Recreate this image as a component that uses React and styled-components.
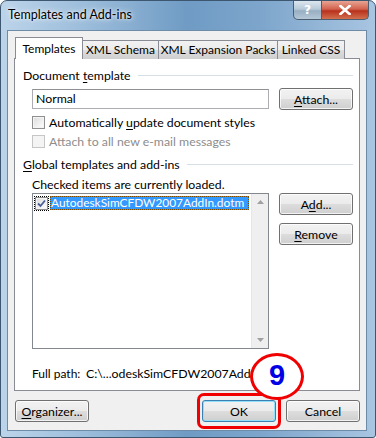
import React from 'react';
import styled, { createGlobalStyle, css } from 'styled-components';

const GlobalStyle = createGlobalStyle`
  html, body {
    margin: 0;
    padding: 0;
    background: #ffffff;
  }
  body {
    font-family: "Segoe UI", Lato, "Noto Sans", sans-serif;
    font-size: 12.3px;
    line-height: 15px;
    color: #000;
  }
`;

const Window = styled.div`
  position: relative;
  width: 376px;
  height: 438px;
  box-sizing: border-box;
  border: 1px solid #3d5770;
  border-radius: 7px 7px 3px 3px;
  background: linear-gradient(to right, #bcd4ea 0%, #98bad9 25%, #6f9bc4 50%, #7ea6cc 70%, #a8c5e1 100%);
  display: flex;
  flex-direction: column;
  padding: 0 8px 6px 6px;
  overflow: hidden;
`;

const TitleBar = styled.div`
  height: 28px;
  display: flex;
  align-items: flex-start;
  justify-content: space-between;
`;

const Title = styled.div`
  padding: 6px 0 0 1px;
  font-size: 12.5px;
  color: #000;
  text-shadow: 0 0 6px rgba(255, 255, 255, 0.9), 0 0 3px rgba(255, 255, 255, 0.9);
`;

const CaptionButtons = styled.div`
  display: flex;
  margin-right: -2px;
`;

const CaptionButton = styled.div`
  height: 19px;
  box-sizing: border-box;
  border: 1px solid #4b5d70;
  border-top: none;
  display: flex;
  align-items: center;
  justify-content: center;
  color: #fff;
  font-weight: bold;
  font-family: "DejaVu Sans", sans-serif;
  ${(p) =>
    p.close
      ? css`
          width: 47px;
          border-radius: 0 0 5px 0;
          border-left: none;
          background: linear-gradient(to bottom, #e8a493 0%, #d2624e 45%, #b8311c 55%, #d2704f 100%);
        `
      : css`
          width: 29px;
          border-radius: 0 0 0 5px;
          background: linear-gradient(to bottom, #dce6ef 0%, #b8cad9 45%, #98aec2 55%, #b4c8d8 100%);
        `}
`;

const Client = styled.div`
  flex: 1;
  background: #f0f0f0;
  border: 1px solid #6e8ba7;
  margin-top: 1px;
  padding: 6px 6px 0 6px;
  display: flex;
  flex-direction: column;
`;

const Tabs = styled.div`
  display: flex;
  align-items: flex-end;
  padding-left: 1px;
  height: 22px;
  position: relative;
  z-index: 1;
  margin-bottom: -1px;
  font-size: 12px;
`;

const Tab = styled.div`
  box-sizing: border-box;
  width: ${(p) => p.w}px;
  border: 1px solid #898c95;
  border-bottom: none;
  margin-right: -1px;
  white-space: nowrap;
  display: flex;
  justify-content: center;
  ${(p) =>
    p.active
      ? css`
          height: 22px;
          padding-top: 3px;
          background: #fff;
          position: relative;
          z-index: 2;
        `
      : css`
          height: 19px;
          padding-top: 1px;
          background: linear-gradient(to bottom, #f2f2f2 0%, #ebebeb 50%, #dddddd 51%, #cfcfcf 100%);
        `}
`;

const Panel = styled.div`
  background: #fff;
  border: 1px solid #898c95;
  height: 333px;
  box-sizing: border-box;
  padding: 8px 6px 0 8px;
  display: flex;
  flex-direction: column;
`;

const GroupHeader = styled.div`
  display: flex;
  align-items: center;
  height: 16px;
  margin-top: ${(p) => p.gap || 0}px;
  &::after {
    content: '';
    flex: 1;
    border-top: 1px solid #d5dfe5;
    margin-left: 7px;
  }
`;

const Indent = styled.div`
  padding-left: 9px;
  height: ${(p) => p.h || 15}px;
  margin-top: ${(p) => p.gap || 0}px;
  display: flex;
  align-items: center;
  white-space: nowrap;
`;

const TextBox = styled.div`
  width: 237px;
  height: 20px;
  box-sizing: border-box;
  border: 1px solid #abadb3;
  border-top-color: #8e9094;
  padding: 1px 0 0 3px;
  line-height: 16px;
`;

const Button = styled.div`
  width: ${(p) => p.w || 74}px;
  height: 22px;
  box-sizing: border-box;
  border: 1px solid ${(p) => (p.primary ? '#3c7fb1' : '#707070')};
  border-radius: 3px;
  background: linear-gradient(to bottom, #f2f2f2 0%, #ebebeb 50%, #dddddd 51%, #cfcfcf 100%);
  box-shadow: inset 0 0 0 1px ${(p) => (p.primary ? '#8ee0fb' : 'rgba(255,255,255,0.75)')};
  display: flex;
  align-items: center;
  justify-content: center;
  flex-shrink: 0;
  margin-left: ${(p) => p.ml || 0}px;
`;

const Check = styled.div`
  width: 13px;
  height: 13px;
  box-sizing: border-box;
  border: 1px solid ${(p) => (p.disabled ? '#c6c6c6' : '#8f8f8f')};
  background: ${(p) =>
    p.disabled
      ? '#f4f4f4'
      : 'linear-gradient(135deg, #dcdcdc 0%, #f0f0f0 60%, #ffffff 100%)'};
  box-shadow: inset 0 0 0 1px #f4f4f4;
  flex-shrink: 0;
  display: flex;
  align-items: center;
  justify-content: center;
  margin-right: 4px;
`;

const CheckLabel = styled.span`
  color: ${(p) => (p.disabled ? '#8d8d8d' : '#000')};
`;

const Key = styled.span`
  text-decoration: underline;
  text-underline-offset: 2px;
`;

const ListRow = styled.div`
  display: flex;
  margin-top: 1px;
  padding-left: 9px;
  gap: 10px;
  align-items: flex-start;
`;

const ListBox = styled.div`
  width: 237px;
  height: 156px;
  box-sizing: border-box;
  border: 1px solid #828790;
  display: flex;
`;

const ListItems = styled.div`
  flex: 1;
  min-width: 0;
  padding: 2px 0 0 2px;
`;

const ListItem = styled.div`
  display: flex;
  align-items: center;
  height: 14px;
  .check {
    outline: 1px dotted #000;
    margin-right: 2px;
  }
`;

const Selected = styled.div`
  flex: 1;
  height: 14px;
  line-height: 14px;
  font-size: 11.9px;
  background: #3399ff;
  color: #fff;
  padding-left: 1px;
  outline: 1px dotted #7a4a00;
  outline-offset: -1px;
  margin-right: 2px;
  white-space: nowrap;
  overflow: hidden;
`;

const ScrollBar = styled.div`
  width: 17px;
  flex-shrink: 0;
  background: #efefef;
  border-left: 1px solid #e6e6e6;
  display: flex;
  flex-direction: column;
  justify-content: space-between;
  align-items: center;
  padding: 6px 0 6px;
  box-sizing: border-box;
`;

const ButtonStack = styled.div`
  display: flex;
  flex-direction: column;
  gap: 8px;
`;

const PathLabel = styled.span`
  width: 54px;
  flex-shrink: 0;
  font-size: 12px;
`;

const Footer = styled.div`
  display: flex;
  align-items: center;
  height: 22px;
  margin-top: 9px;
  padding-left: 1px;
`;

const Spacer = styled.div`
  flex: 1;
`;

const Highlight = styled.div`
  position: absolute;
  left: 196px;
  top: 392px;
  width: 84px;
  height: 36px;
  box-sizing: border-box;
  border: 3px solid #f00000;
  border-radius: 7px;
  pointer-events: none;
`;

const Badge = styled.div`
  position: absolute;
  left: 249px;
  top: 352px;
  width: 54px;
  height: 47px;
  box-sizing: border-box;
  border: 3px solid #f00000;
  border-radius: 50%;
  background: #fff;
  color: #0000e6;
  font-family: "Liberation Sans", Arial, sans-serif;
  font-weight: bold;
  font-size: 29px;
  line-height: 1;
  display: flex;
  align-items: center;
  justify-content: center;
  padding-bottom: 2px;
`;

const Arrow = ({ down }) => (
  <svg width="7" height="4" viewBox="0 0 7 4">
    <path d={down ? 'M0 0 H7 L3.5 4 Z' : 'M0 4 H7 L3.5 0 Z'} fill="#a0a0a0" />
  </svg>
);

const Tick = () => (
  <svg width="9" height="9" viewBox="0 0 9 9">
    <path d="M1 4.5 L3.5 7 L8 1.5" fill="none" stroke="#4a5f97" strokeWidth="1.8" />
  </svg>
);

export default function App() {
  return (
    <>
      <GlobalStyle />
      <Window>
        <TitleBar>
          <Title>Templates and Add-ins</Title>
          <CaptionButtons>
            <CaptionButton>?</CaptionButton>
            <CaptionButton close>
              <svg width="12" height="10" viewBox="0 0 12 10">
                <path d="M1.5 1 L10.5 9 M10.5 1 L1.5 9" stroke="#fff" strokeWidth="2.6" strokeLinecap="square" />
              </svg>
            </CaptionButton>
          </CaptionButtons>
        </TitleBar>
        <Client>
          <Tabs>
            <Tab active w={68}>Templates</Tab>
            <Tab w={77}>XML Schema</Tab>
            <Tab w={120}>XML Expansion Packs</Tab>
            <Tab w={68}>Linked CSS</Tab>
          </Tabs>
          <Panel>
            <GroupHeader>
              <span>Document <Key>t</Key>emplate</span>
            </GroupHeader>
            <Indent gap={5} h={22}>
              <TextBox>Normal</TextBox>
              <Button ml={10}>
                <span><Key>A</Key>ttach...</span>
              </Button>
            </Indent>
            <Indent gap={5}>
              <Check />
              <CheckLabel>Automatically <Key>u</Key>pdate document styles</CheckLabel>
            </Indent>
            <Indent gap={4}>
              <Check disabled />
              <CheckLabel disabled>Attach to all new e-mail messages</CheckLabel>
            </Indent>
            <GroupHeader gap={7}>
              <span><Key>G</Key>lobal templates and add-ins</span>
            </GroupHeader>
            <Indent gap={5}>Checked items are currently loaded.</Indent>
            <ListRow>
              <ListBox>
                <ListItems>
                  <ListItem>
                    <Check className="check">
                      <Tick />
                    </Check>
                    <Selected>AutodeskSimCFDW2007AddIn.dotm</Selected>
                  </ListItem>
                </ListItems>
                <ScrollBar>
                  <Arrow />
                  <Arrow down />
                </ScrollBar>
              </ListBox>
              <ButtonStack>
                <Button>
                  <span>A<Key>d</Key>d...</span>
                </Button>
                <Button>
                  <span><Key>R</Key>emove</span>
                </Button>
              </ButtonStack>
            </ListRow>
            <Indent gap={17}>
              <PathLabel>Full path:</PathLabel>
              <span>C:\...odeskSimCFDW2007AddIn.dotm</span>
            </Indent>
          </Panel>
          <Footer>
            <Button>
              <span><Key>O</Key>rganizer...</span>
            </Button>
            <Spacer />
            <Button primary>OK</Button>
            <Button ml={10}>Cancel</Button>
          </Footer>
        </Client>
        <Highlight />
        <Badge>9</Badge>
      </Window>
    </>
  );
}
